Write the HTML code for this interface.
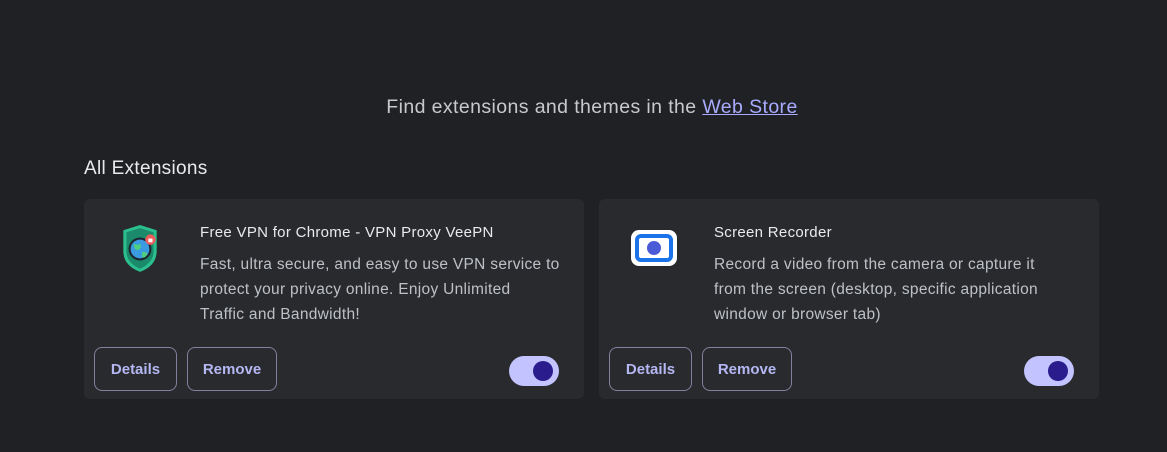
<!DOCTYPE html>
<html><head><style>
body{margin:0;width:1167px;height:452px;background:#202124;font-family:"Liberation Sans",sans-serif;overflow:hidden;position:relative}
.top{position:absolute;top:96px;left:0;width:1167px;padding-left:17px;box-sizing:border-box;text-align:center;color:#c8c9cc;font-size:19.5px;letter-spacing:0.4px}
.top a{color:#a8abff;text-decoration:underline}
h2{position:absolute;left:84px;top:158px;margin:0;font-weight:normal;color:#e8eaed;font-size:19px;letter-spacing:0.3px}
.card{position:absolute;top:199px;width:500px;height:200px;background:#292a2d;border-radius:6px}
.t{position:absolute;left:116px;top:25px;color:#e8eaed;font-size:15px;letter-spacing:0.3px}
.d{position:absolute;left:116px;top:53px;width:380px;white-space:nowrap;color:#bdc1c6;font-size:15.5px;line-height:25px;letter-spacing:0.3px}
.b{position:absolute;top:148px;height:44px;border:1px solid #80819e;border-radius:8px;box-sizing:border-box;color:#b4b7f2;font-weight:bold;font-size:15px;line-height:43px;text-align:center}
.tg{position:absolute;left:425px;top:157px;width:50px;height:30px;border-radius:15px;background:#c2c3ff}
.tg::after{content:"";position:absolute;right:6px;top:5px;width:20px;height:20px;border-radius:50%;background:#2a1c8c}
</style></head><body>
<div class="top">Find extensions and themes in the <a>Web Store</a></div>
<h2>All Extensions</h2>
<div class="card" style="left:84px">
<svg style="position:absolute;left:34px;top:25px" width="44" height="50" viewBox="0 0 40 48">
<path d="M4 6 L20 1 L36 6 L36 26 Q36 40 20 46 Q4 40 4 26 Z" fill="#2bbf8e"/>
<path d="M7 8 L20 4 L33 8 L33 26 Q33 37 20 43 Q7 37 7 26 Z" fill="#1a8a6a"/>
<circle cx="20" cy="24" r="11" fill="#1c2630"/><circle cx="20" cy="24" r="9" fill="#3a9be0"/>
<path d="M14 19 q4 2 6 0 q2 4 -2 6 q-4 0 -4 -6z M22 27 q4 -1 5 2 q-2 4 -5 3z" fill="#4fcf7c"/>
<circle cx="30" cy="15" r="5" fill="#ef5b5b"/><rect x="28" y="14" width="4" height="3.5" fill="#fff"/>
</svg>
<div class="t">Free VPN for Chrome - VPN Proxy VeePN</div>
<div class="d">Fast, ultra secure, and easy to use VPN service to<br>protect your privacy online. Enjoy Unlimited<br>Traffic and Bandwidth!</div>
<div class="b" style="left:10px;width:83px">Details</div>
<div class="b" style="left:103px;width:90px">Remove</div>
<div class="tg"></div>
</div>
<div class="card" style="left:599px">
<div style="position:absolute;left:32px;top:31px;width:46px;height:36px;border-radius:8px;background:#fff"></div>
<div style="position:absolute;left:36px;top:35px;width:30px;height:20px;border:4px solid #1a73e8;border-radius:6px;background:#fff"></div>
<div style="position:absolute;left:48px;top:42px;width:14px;height:14px;border-radius:50%;background:#4b5bd8"></div>
<div class="t" style="left:115px">Screen Recorder</div>
<div class="d" style="left:115px">Record a video from the camera or capture it<br>from the screen (desktop, specific application<br>window or browser tab)</div>
<div class="b" style="left:10px;width:83px">Details</div>
<div class="b" style="left:103px;width:90px">Remove</div>
<div class="tg"></div>
</div>
</body></html>
